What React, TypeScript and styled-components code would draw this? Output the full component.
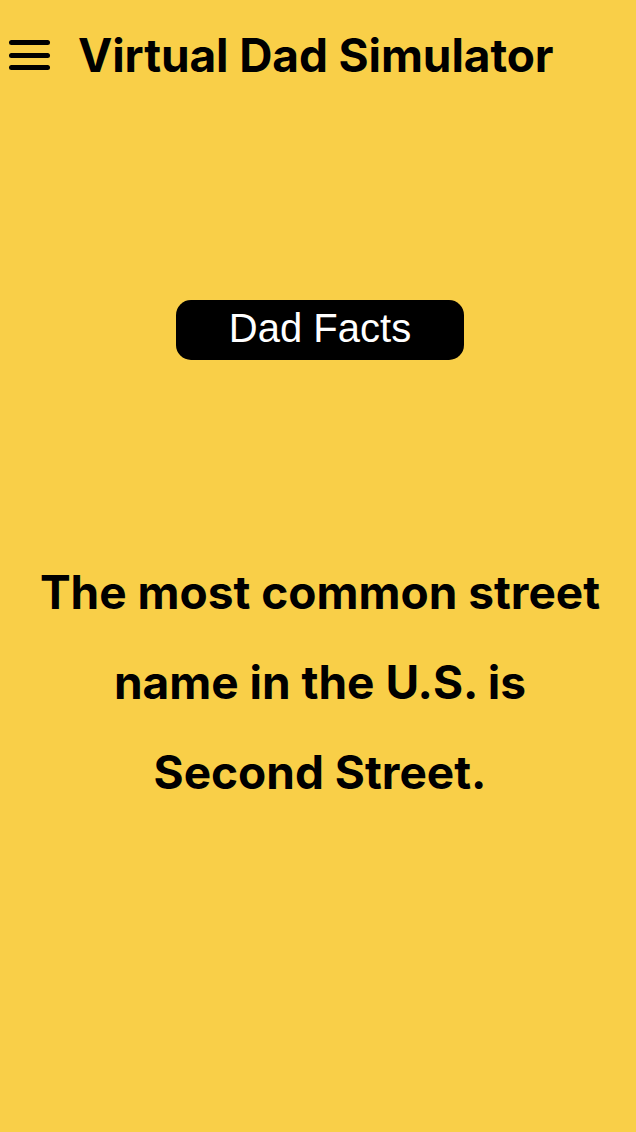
import React from "react";
import styled, { createGlobalStyle } from "styled-components";

const Global = createGlobalStyle`
  html, body { margin: 0; padding: 0; background: #f9cf48; }
  body { font-family: Inter, "Liberation Sans", sans-serif; }
  #root { min-height: 1132px; }
`;

const Page = styled.div`
  min-height: 1132px;
  background: #f9cf48;
  display: flex;
  flex-direction: column;
  align-items: center;
  padding-left: 4px;
  box-sizing: border-box;
`;

const Header = styled.header`
  align-self: stretch;
  display: flex;
  align-items: center;
  gap: 28px;
  height: 110px;
  padding: 0 0 0 5px;
  box-sizing: border-box;
`;

const MenuButton = styled.button`
  border: none;
  background: none;
  padding: 0;
  width: 41px;
  height: 30px;
  display: flex;
  flex-direction: column;
  justify-content: space-between;
  cursor: pointer;
`;

const MenuLine = styled.span`
  display: block;
  height: 5px;
  width: 41px;
  border-radius: 3px;
  background: #000;
`;

const Title = styled.h1`
  margin: 0;
  font-family: Inter, "Liberation Sans", sans-serif;
  font-weight: 700;
  font-size: 46px;
  letter-spacing: -0.1px;
  color: #000;
`;

const FactButton = styled.button`
  margin-top: 190px;
  width: 288px;
  height: 60px;
  border: none;
  border-radius: 15px;
  background: #000;
  color: #fff;
  font-family: "Liberation Sans", Arial, sans-serif;
  font-size: 40px;
  line-height: 56px;
  padding: 0 0 4px;
  cursor: pointer;
`;

const Fact = styled.p`
  margin: 187px 0 0;
  padding: 0 30px;
  text-align: center;
  font-family: Inter, "Liberation Sans", sans-serif;
  font-weight: 700;
  font-size: 46px;
  line-height: 90px;
  color: #000;
`;

export default function App() {
  return (
    <>
      <Global />
      <Page>
        <Header>
          <MenuButton aria-label="menu">
            <MenuLine />
            <MenuLine />
            <MenuLine />
          </MenuButton>
          <Title>Virtual Dad Simulator</Title>
        </Header>
        <FactButton>Dad Facts</FactButton>
        <Fact>The most common street name in the U.S. is Second Street.</Fact>
      </Page>
    </>
  );
}
